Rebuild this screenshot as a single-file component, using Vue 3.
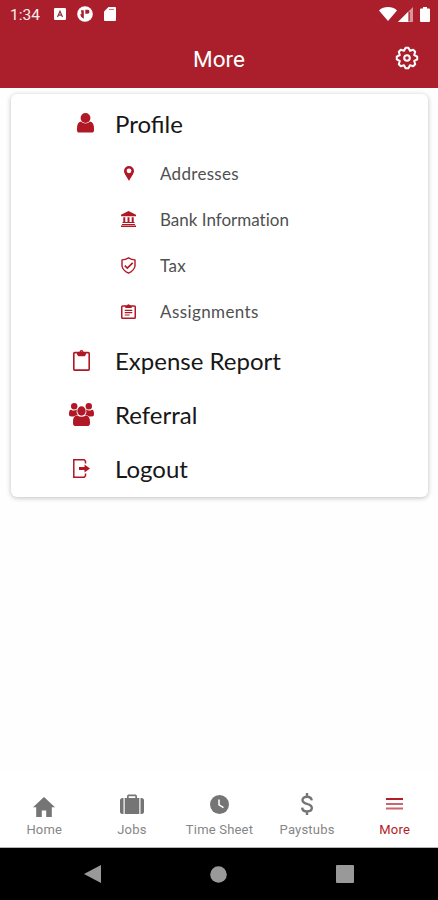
<script setup>
import { ref } from 'vue'

const profileItems = [
  { key: 'addresses', label: 'Addresses' },
  { key: 'bank', label: 'Bank Information' },
  { key: 'tax', label: 'Tax' },
  { key: 'assignments', label: 'Assignments' },
]

const menuItems = [
  { key: 'expense', label: 'Expense Report' },
  { key: 'referral', label: 'Referral' },
  { key: 'logout', label: 'Logout' },
]

const tabs = [
  { key: 'home', label: 'Home' },
  { key: 'jobs', label: 'Jobs' },
  { key: 'time', label: 'Time Sheet' },
  { key: 'pay', label: 'Paystubs' },
  { key: 'more', label: 'More' },
]

const activeTab = ref('more')
</script>

<template>
  <div class="screen">
    <header class="header">
      <div class="status">
        <span class="status__time">1:34</span>
        <svg class="status__app" width="12" height="12" viewBox="0 0 12 12">
          <rect width="12" height="12" rx="1.2" fill="#fff" />
          <path d="M3.5 9L6 3.200l2.500 5.800M4.300 7.200h3.400" fill="none" stroke="#8d3640" stroke-width="1.2" />
        </svg>
        <svg class="status__disc" width="16" height="16" viewBox="0 0 16 16">
          <circle cx="8" cy="8" r="7.8" fill="#fff" />
          <path d="M4 4.200h2.800v8.600Q3.600 11.500 3.200 8.500L4.500 8z" fill="#ab1f2c" />
          <path d="M8.300 3.800h2.200a2 2 0 0 1 0 4H8.300z" fill="#ab1f2c" />
        </svg>
        <svg class="status__card" width="12" height="14" viewBox="0 0 12 14">
          <path d="M4.500 0H11a1 1 0 0 1 1 1v12a1 1 0 0 1-1 1H1a1 1 0 0 1-1-1V4.500z" fill="#fff" />
          <path d="M4.800 2.500h5.200" stroke="#c97780" stroke-width="1" />
        </svg>
        <svg class="status__wifi" width="18" height="14" viewBox="0 0 18 14">
          <path d="M0 3.400C5-1 13-1 18 3.400L9 14z" fill="#fff" />
        </svg>
        <svg class="status__signal" width="15" height="15" viewBox="0 0 15 15">
          <path d="M0 15L15 0v15z" fill="#d9959b" />
          <path d="M0 15L10 5v10z" fill="#fff" />
          <path d="M11.300 5v9" stroke="#ab1f2c" stroke-width="1" />
        </svg>
        <svg class="status__battery" width="10" height="15" viewBox="0 0 10 15">
          <path d="M3 0h4v1.500h2a1 1 0 0 1 1 1V14a1 1 0 0 1-1 1H1a1 1 0 0 1-1-1V2.500a1 1 0 0 1 1-1h2z" fill="#fff" />
        </svg>
      </div>
      <div class="titlebar">
        <h1 class="titlebar__title">More</h1>
        <button type="button" class="titlebar__settings" aria-label="Settings">
          <svg width="24" height="24" viewBox="-12 -12 24 24" fill="none" stroke="#fff" stroke-width="2" stroke-linejoin="round">
            <path d="M-3-7.200L-1.400-10.200H1.400L3-7.200 6.200-8.200 8.200-6.200 7.200-3 10.200-1.400V1.400L7.200 3 8.200 6.200 6.200 8.200 3 7.200 1.400 10.200H-1.400L-3 7.200-6.200 8.200-8.200 6.200-7.200 3-10.200 1.400V-1.400L-7.200-3-8.200-6.200-6.200-8.200Z" />
            <circle r="2.800" />
          </svg>
        </button>
      </div>
    </header>

    <main class="content">
      <section class="card">
        <div class="row row--profile">
          <span class="row__icon">
            <svg width="17" height="20" viewBox="0 0 17 20" fill="currentColor">
              <circle cx="8.500" cy="5" r="4.900" />
              <path d="M4 8.500c2.500 2.600 6.500 2.600 9 0 2.900.5 4 2.900 4 7v1.700c0 1.600-.8 2.300-2.200 2.300H2.200C.8 19.500 0 18.800 0 17.200v-1.700c0-4.100 1.100-6.500 4-7z" />
            </svg>
          </span>
          <span class="row__label">Profile</span>
        </div>

        <div v-for="item in profileItems" :key="item.key" class="row row--sub">
          <span class="row__icon">
            <svg v-if="item.key === 'addresses'" width="10" height="15" viewBox="0 0 10 15">
              <path d="M5 0a5 5 0 0 1 5 5c0 2.500-2 4.500-5 10C2 9.500 0 7.500 0 5a5 5 0 0 1 5-5zm0 2.400a2.400 2.400 0 1 0 0 4.800 2.400 2.400 0 0 0 0-4.800z" fill="currentColor" />
            </svg>
            <svg v-else-if="item.key === 'bank'" width="15" height="16" viewBox="0 0 15 16" fill="currentColor">
              <path d="M7.500 0L15 3.700v1.600H0V3.700zM1 13h13v1H1zM0 14.500h15V16H0z" />
              <path d="M2.300 6.300h2v5.500h-2zM6.500 6.300h2v5.500h-2zM10.700 6.300h2v5.500h-2zM1.500 11h12v1h-12z" />
            </svg>
            <svg v-else-if="item.key === 'tax'" width="15" height="17" viewBox="0 0 15 17" fill="none" stroke="currentColor">
              <path d="M7.500.8Q10.500 2.700 14 2.900V9q-.7 4.500-6.500 7.200Q1.700 13.500 1 9V2.900Q4.500 2.700 7.500.8z" stroke-width="1.400" stroke-linejoin="round" />
              <path d="M3.800 8.700l2.500 2.400 5.400-5.200" stroke-width="1.600" />
            </svg>
            <svg v-else width="15" height="15" viewBox="0 0 14 15" preserveAspectRatio="none" fill="none" stroke="currentColor">
              <rect x=".7" y="2" width="12.600" height="12.300" rx=".8" stroke-width="1.400" />
              <path d="M4 1.800h1.500a1.500 1.500 0 0 1 3 0H10V4H4z" fill="currentColor" stroke="none" />
              <path d="M3.500 6.300h7M3.500 8.700h7M3.500 11h4.500" stroke-width="1.200" />
            </svg>
          </span>
          <span class="row__label" :class="`row__label--${item.key}`">{{ item.label }}</span>
        </div>

        <div v-for="item in menuItems" :key="item.key" class="row">
          <span class="row__icon">
            <svg v-if="item.key === 'expense'" width="17" height="21" viewBox="0 0 17 21">
              <rect x=".8" y="2.600" width="15.400" height="17.500" rx=".8" fill="none" stroke="currentColor" stroke-width="1.600" />
              <path d="M4 2h2.500a2 2 0 0 1 4 0H13v2.500l-1.300 1.700H5.300L4 4.500zM8.500 1.500a.8.800 0 1 0 0 1.600.8.800 0 0 0 0-1.600z" fill="currentColor" />
            </svg>
            <svg v-else-if="item.key === 'referral'" width="25" height="23" viewBox="0 0 25 23" fill="currentColor">
              <circle cx="5.200" cy="3.300" r="3.200" />
              <circle cx="19.800" cy="3.300" r="3.200" />
              <path d="M2 6.700c2 1.200 4 1.200 6-.2-.8 2.500-.3 4.300 1 5.700-1.800 0-3 .3-4 1.300H2.500C.7 13.500 0 12.800 0 11.300 0 8.500.5 6.700 2 6.700zM23 6.700c-2 1.200-4 1.200-6-.2.8 2.500.3 4.300-1 5.700 1.800 0 3 .3 4 1.300h2.500c1.800 0 2.500-.7 2.500-2.200 0-2.800-.5-4.600-2-4.600z" />
              <ellipse cx="12.500" cy="8" rx="4.200" ry="4.700" />
              <path d="M8.200 12.500c2.600 1.700 6 1.700 8.600 0 3 .2 4.200 2.800 4.200 6.500v1.200c0 1.900-1 2.800-2.700 2.800H6.700C5 23 4 22.100 4 20.200V19c0-3.700 1.200-6.300 4.200-6.500z" />
            </svg>
            <svg v-else width="17" height="19" viewBox="0 0 17 19">
              <path d="M12.500 4.500V2.200L11.200.8H.8v17.400h10.400l1.300-1.500v-2.200" fill="none" stroke="currentColor" stroke-width="1.500" />
              <path d="M6 8h5.500V5.500L17 9.500l-5.500 4V11H6z" fill="currentColor" />
            </svg>
          </span>
          <span class="row__label">{{ item.label }}</span>
        </div>
      </section>
    </main>

    <nav class="tabs">
      <button
        v-for="tab in tabs"
        :key="tab.key"
        type="button"
        class="tab"
        :class="{ 'is-active': tab.key === activeTab }"
        @click="activeTab = tab.key"
      >
        <span class="tab__icon">
          <svg v-if="tab.key === 'home'" class="icon-home" width="22" height="20" viewBox="0 0 22 20" fill="currentColor">
            <path d="M11 0l11 10.200h-3.200V20h-5.600v-6.500H8.800V20H3.200v-9.800H0z" />
          </svg>
          <svg v-else-if="tab.key === 'jobs'" width="24" height="20" viewBox="0 0 24 20" fill="currentColor">
            <path d="M4.700 4H7V1.700L8.200.5h7.600L17 1.700V4h2.300v16H4.700zM8.700 4h6.600V2.200H8.700z" fill-rule="evenodd" />
            <path d="M3.500 4v16h-1Q0 20 0 17.500v-11Q0 4 2.500 4zM20.500 4v16h1q2.500 0 2.500-2.500v-11Q24 4 21.500 4z" />
          </svg>
          <svg v-else-if="tab.key === 'time'" width="19" height="19" viewBox="0 0 19 19">
            <circle cx="9.500" cy="9.500" r="9.500" fill="currentColor" />
            <path d="M9 4.500v5.300l4.500 2.900" fill="none" stroke="#fff" stroke-width="1.500" />
          </svg>
          <svg v-else-if="tab.key === 'pay'" width="12" height="22" viewBox="0 0 12 22" fill="none" stroke="currentColor" stroke-width="2.400">
            <path d="M10.700 7.300C10.500 5 8.800 3.700 6 3.700c-2.700 0-4.500 1.300-4.500 3.300 0 2.300 1.800 3.100 4.500 3.900 3 .8 4.800 1.700 4.800 4.100 0 2.200-1.900 3.400-4.800 3.400s-4.700-1.400-4.800-3.800M6 0v4M6 18v4" />
          </svg>
          <svg v-else width="17" height="12" viewBox="0 0 17 12" fill="none" stroke="currentColor">
            <path d="M0 1h17" stroke-width="2" />
            <path d="M0 6h17M0 10.500h17" stroke-width="2" opacity=".68" />
          </svg>
        </span>
        <span class="tab__label">{{ tab.label }}</span>
      </button>
    </nav>

    <footer class="system">
      <svg width="17" height="18" viewBox="0 0 17 18"><path d="M0 9L17 0v18z" fill="#999" /></svg>
      <svg width="17" height="17" viewBox="0 0 17 17"><circle cx="8.500" cy="8.500" r="8.300" fill="#999" /></svg>
      <svg width="18" height="18" viewBox="0 0 18 18"><rect width="18" height="18" rx="1" fill="#999" /></svg>
    </footer>
  </div>
</template>

<style>
body {
  margin: 0;
  background: #fff;
}
</style>

<style scoped>
.screen {
  display: flex;
  flex-direction: column;
  width: 438px;
  height: 900px;
  overflow: hidden;
  background: #fefefe;
  font-family: Roboto, 'Liberation Sans', sans-serif;
}

.screen svg {
  display: block;
  flex: none;
}

button {
  all: unset;
  box-sizing: border-box;
  cursor: pointer;
}

.header {
  height: 88px;
  flex: none;
  color: #fff;
  background: #ab1f2c;
}

.status {
  display: flex;
  align-items: center;
  height: 28px;
  padding: 0 8px 0 10px;
}

.status__time {
  width: 30px;
  padding-top: 1px;
  font-size: 15.5px;
  line-height: 28px;
  white-space: nowrap;
  opacity: 0.93;
}

.status__app {
  margin-left: 14px;
}

.status__disc {
  margin-left: 11px;
}

.status__card {
  margin-left: 11px;
}

.status__wifi {
  margin-left: auto;
}

.status__signal {
  margin-left: 1px;
}

.status__battery {
  margin-left: 7px;
}

.titlebar {
  display: grid;
  grid-template-columns: 44px 1fr 44px;
  align-items: center;
  height: 60px;
}

.titlebar__title {
  grid-column: 2;
  margin: 0;
  padding-top: 2px;
  font-size: 22.5px;
  font-weight: 400;
  line-height: 58px;
  text-align: center;
}

.titlebar__settings {
  margin-left: 1px;
}

.content {
  flex: 1;
  padding: 6px 10px 0 11px;
}

.card {
  box-sizing: border-box;
  height: 403px;
  padding-top: 4px;
  border-radius: 6px;
  background: #fff;
  box-shadow: 0 1px 5px rgba(0, 0, 0, 0.25);
}

.row {
  display: flex;
  align-items: center;
  gap: 20px;
  height: 54px;
  padding-left: 58px;
}

.row__icon {
  box-sizing: border-box;
  display: flex;
  justify-content: center;
  width: 26px;
  padding-right: 1px;
  padding-bottom: 3px;
  color: #b01826;
}

.row__label {
  padding-bottom: 2px;
  color: #171717;
  font-family: Lato, 'Open Sans', sans-serif;
  font-size: 24px;
  line-height: 30px;
  white-space: nowrap;
}

.row--profile {
  height: 53px;
}

.row--profile .row__icon {
  padding-right: 0;
  padding-left: 7px;
}

.row--sub {
  gap: 21px;
  height: 46px;
  padding-left: 108px;
}

.row--sub .row__icon {
  width: 20px;
  padding-bottom: 2px;
}

.row--sub .row__label {
  padding-bottom: 0;
  color: #505050;
  font-size: 17px;
  font-variant-ligatures: none;
}

.row--sub .row__label--addresses {
  letter-spacing: 0.3px;
}

.row--sub .row__label--assignments {
  letter-spacing: 0.4px;
}

.row--sub .row__label--tax {
  letter-spacing: 0.4px;
}

.tabs {
  display: grid;
  grid-template-columns: repeat(5, 1fr);
  height: 77px;
  flex: none;
  background: #fff;
  border-bottom: 1px solid #b5b5b5;
  box-sizing: border-box;
}

.tab {
  display: flex;
  flex-direction: column;
  align-items: center;
  padding-top: 21px;
  padding-left: 1px;
  color: #757575;
}

.tab__icon {
  display: flex;
  align-items: center;
  height: 24px;
}

.icon-home {
  margin-top: 5px;
}

.tab__label {
  margin-top: 6px;
  font-size: 13px;
  line-height: 16px;
  letter-spacing: 0.2px;
  color: #868686;
  white-space: nowrap;
}

.tab.is-active,
.tab.is-active .tab__label {
  color: #b51c27;
}

.system {
  display: flex;
  align-items: center;
  justify-content: space-between;
  height: 52px;
  flex: none;
  box-sizing: border-box;
  padding: 0 84px;
  background: #000;
}
</style>
